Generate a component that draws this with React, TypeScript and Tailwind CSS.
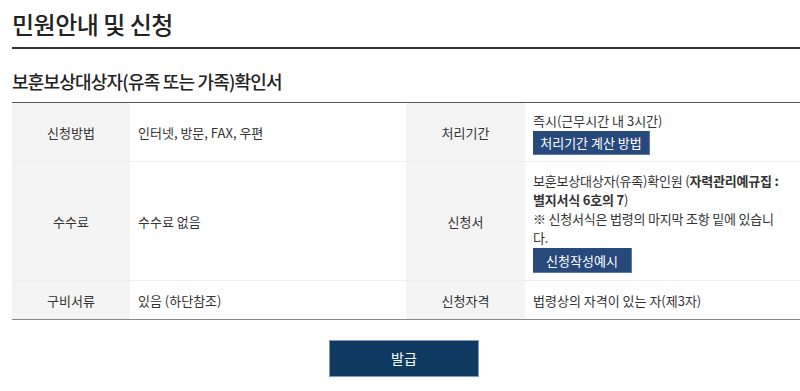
const font = { fontFamily: '"Noto Sans CJK KR", "Noto Sans", sans-serif' };

const Th = ({ children, className = "" }: { children: React.ReactNode; className?: string }) => (
  <div className={"flex items-center justify-center bg-[#f4f4f4] text-[#333] " + className}>{children}</div>
);

const Td = ({ children, className = "" }: { children: React.ReactNode; className?: string }) => (
  <div className={"flex flex-col items-start justify-center px-[8px] text-[#333] " + className}>{children}</div>
);

const SmallBtn = ({ label, className = "" }: { label: string; className?: string }) => (
  <button
    className={
      "mt-[1px] px-0 whitespace-nowrap bg-[#27497c] border-b border-r border-[#5d7aa5] text-white text-[13px] font-normal leading-none " +
      className
    }
  >
    {label}
  </button>
);

export default function App() {
  return (
    <div className="w-[800px] h-[391px] bg-white pl-[12px] overflow-hidden" style={font}>
      <h1 className="pt-[7px] h-[47px] text-[24px] leading-[34px] font-medium text-[#222] tracking-[-0.5px]">
        민원안내 및 신청
      </h1>
      <div className="h-[2px] bg-[#333]" />
      <h2 className="pt-[19px] pb-[8px] text-[18px] leading-[26px] font-medium text-[#222] tracking-[-0.8px]">
        보훈보상대상자(유족 또는 가족)확인서
      </h2>
      <div className="border-t border-[#555] border-b border-b-[#888] text-[13px] leading-[19px]">
        <div className="grid grid-cols-[118px_276px_119px_1fr] h-[59px] border-b border-[#eeeeee]">
          <Th>신청방법</Th>
          <Td>인터넷, 방문, FAX, 우편</Td>
          <Th>처리기간</Th>
          <Td className="pt-[1px]">
            <span>즉시(근무시간 내 3시간)</span>
            <SmallBtn label="처리기간 계산 방법" className="h-[24px] w-[117px]" />
          </Td>
        </div>
        <div className="grid grid-cols-[118px_276px_119px_1fr] h-[119px] border-b border-[#eeeeee]">
          <Th>수수료</Th>
          <Td>수수료 없음</Td>
          <Th>신청서</Th>
          <Td className="whitespace-nowrap pt-[2px] tracking-[-0.2px]">
            <span>
              보훈보상대상자(유족)확인원 (<b className="font-bold">자력관리예규집 :</b>
            </span>
            <span>
              <b className="font-bold">별지서식 6호의 7</b>)
            </span>
            <span>※ 신청서식은 법령의 마지막 조항 밑에 있습니</span>
            <span>다.</span>
            <SmallBtn label="신청작성예시" className="h-[25px] w-[99px] tracking-normal" />
          </Td>
        </div>
        <div className="grid grid-cols-[118px_276px_119px_1fr] h-[38px]">
          <Th>구비서류</Th>
          <Td>있음 (하단참조)</Td>
          <Th>신청자격</Th>
          <Td>법령상의 자격이 있는 자(제3자)</Td>
        </div>
      </div>
      <div className="flex justify-center pt-[20px] pr-[4px]">
        <button className="h-[37px] w-[150px] bg-[#0e3a62] border border-[#7d9bbd] text-white text-[14px]">
          발급
        </button>
      </div>
    </div>
  );
}
